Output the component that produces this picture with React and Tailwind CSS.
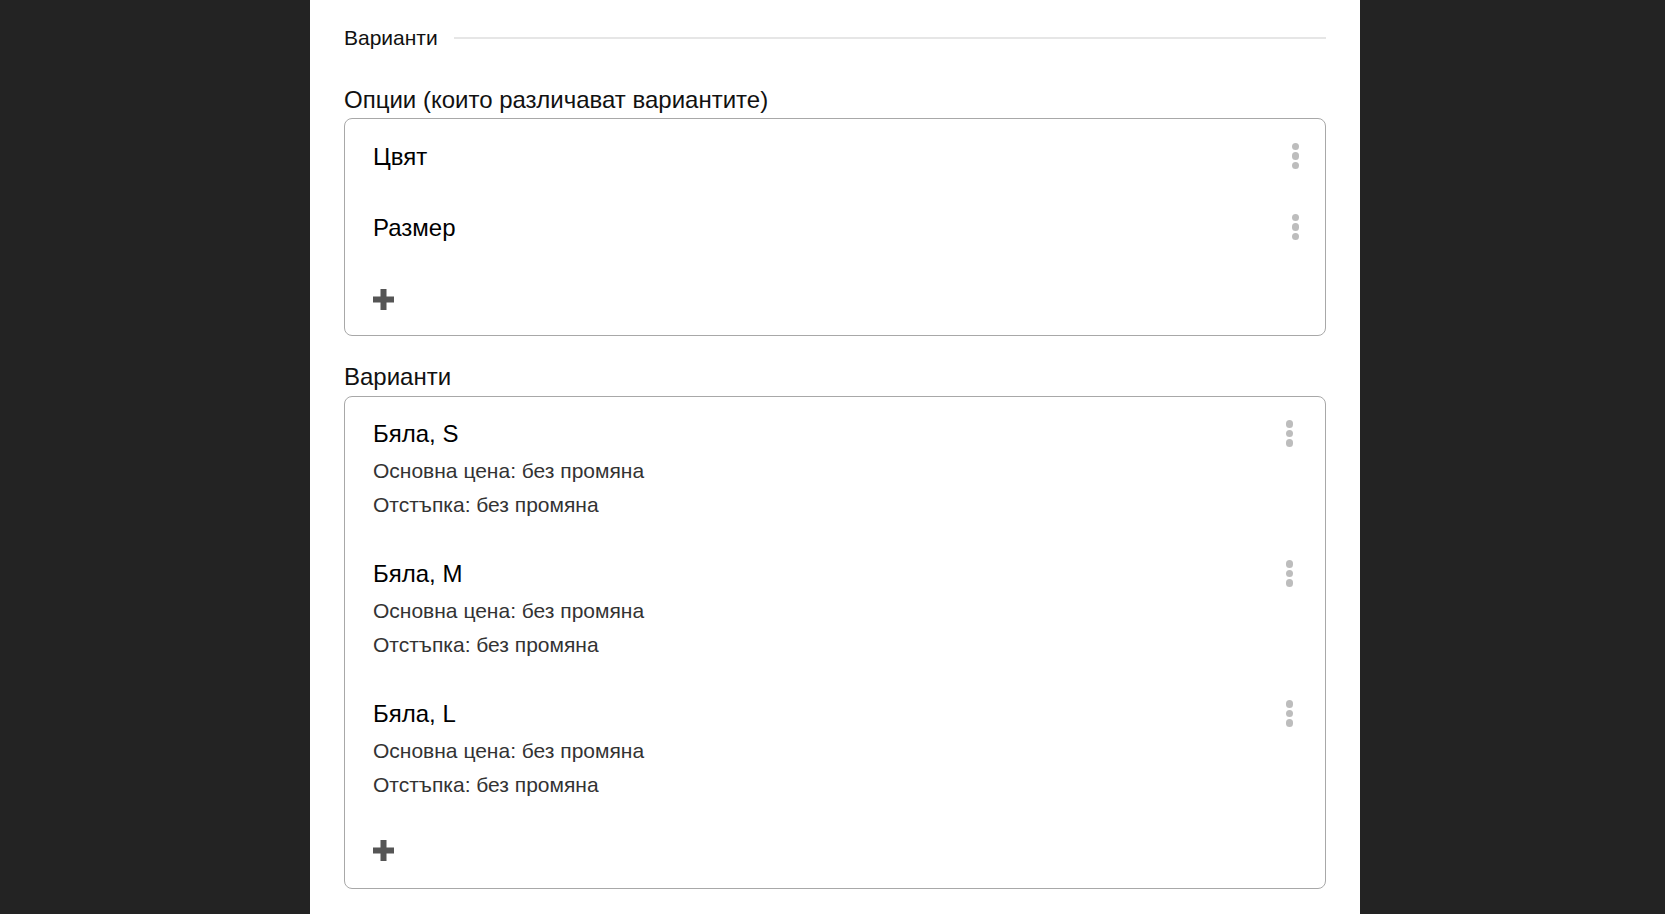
import React from 'react';

const Dots = ({ className = '' }) => (
  <div className={`flex flex-col items-center gap-[2px] ${className}`}>
    <span className="block w-[7.5px] h-[7.5px] rounded-full bg-[#bdbdbd]" />
    <span className="block w-[7.5px] h-[7.5px] rounded-full bg-[#bdbdbd]" />
    <span className="block w-[7.5px] h-[7.5px] rounded-full bg-[#bdbdbd]" />
  </div>
);

const Plus = () => (
  <svg width="21" height="21" viewBox="0 0 21 21" className="block">
    <rect x="7.5" y="0" width="6" height="21" fill="#555555" />
    <rect x="0" y="7.5" width="21" height="6" fill="#555555" />
  </svg>
);

const options = ['Цвят', 'Размер'];
const variants = ['Бяла, S', 'Бяла, M', 'Бяла, L'];

export default function App() {
  return (
    <div className="min-h-screen bg-[#232323] font-['Liberation_Sans',Arial,sans-serif]">
      <div className="ml-[310px] w-[1050px] min-h-screen bg-white px-[34px] pt-[23px] pb-10">
        {/* section header */}
        <div className="flex items-center gap-[16px] h-[30px] text-[21px] text-[#111]">
          <span>Варианти</span>
          <div className="flex-1 h-[2px] bg-[#e6e6e6]" />
        </div>

        {/* options */}
        <div className="mt-[32px] text-[24px] leading-[30px] text-[#111]">Опции (които различават вариантите)</div>
        <div className="mt-[3px] border border-[#a8a8a8] rounded-[8px] pt-[3px]">
          {options.map((o) => (
            <div key={o} className="h-[71px] flex items-center pl-[28px] pr-[26px]">
              <span className="flex-1 text-[24px] text-black -mt-[1px]">{o}</span>
              <Dots className="-mt-[3px]" />
            </div>
          ))}
          <div className="h-[71px] flex items-center pl-[28px]">
            <Plus />
          </div>
        </div>

        {/* variants */}
        <div className="mt-[26px] text-[24px] leading-[30px] text-[#111]">Варианти</div>
        <div className="mt-[4px] border border-[#a8a8a8] rounded-[8px]">
          {variants.map((v) => (
            <div key={v} className="pt-[17px] pb-[15px] pl-[28px] pr-[32px] flex">
              <div className="flex-1">
                <div className="text-[24px] leading-[40px] text-black">{v}</div>
                <div className="text-[21px] leading-[34px] text-[#333]">Основна цена: без промяна</div>
                <div className="text-[21px] leading-[34px] text-[#333]">Отстъпка: без промяна</div>
              </div>
              <Dots className="mt-[6px]" />
            </div>
          ))}
          <div className="h-[66px] mb-[5px] flex items-center pl-[28px]">
            <Plus />
          </div>
        </div>
      </div>
    </div>
  );
}
